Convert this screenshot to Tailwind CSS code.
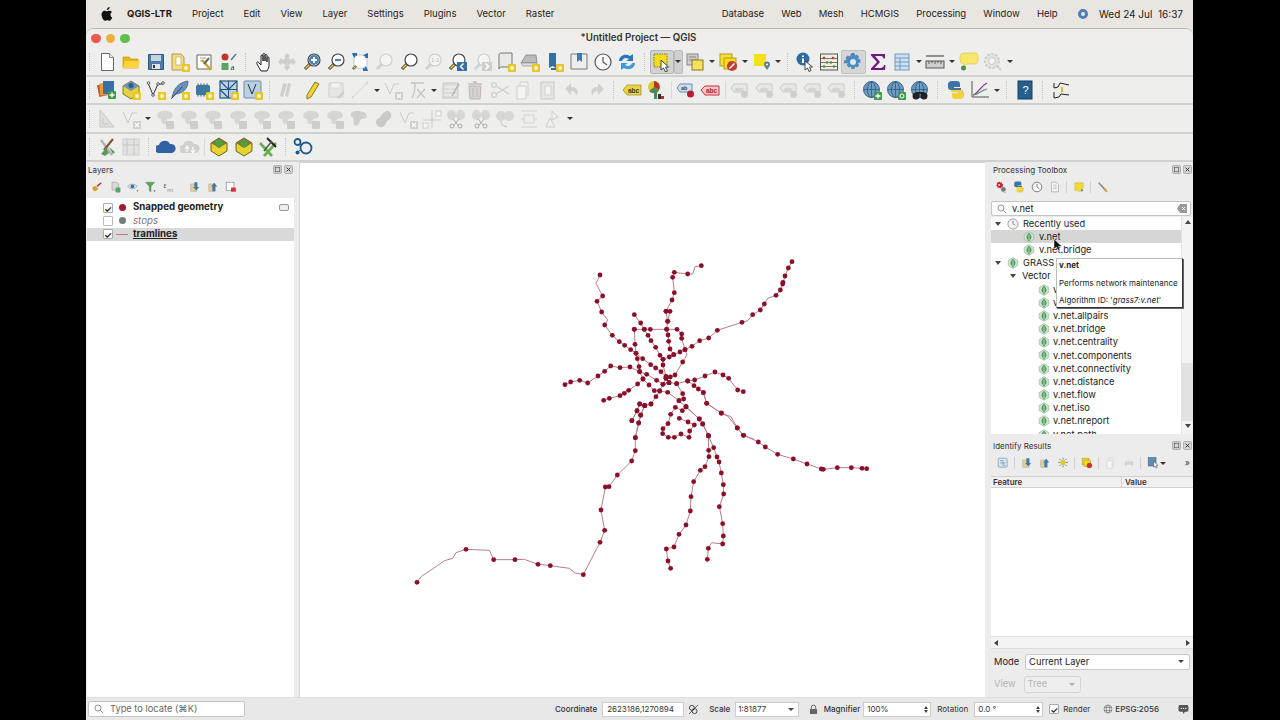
<!DOCTYPE html>
<html lang="en">
<head>
<meta charset="UTF-8">
<title>QGIS</title>
<script src="https://cdn.jsdelivr.net/npm/@tailwindcss/browser@4"></script>
</head>
<body class="bg-black w-[1280px] h-[720px] overflow-hidden font-['Inter',sans-serif] text-[#222] text-[9.300px]">

<!-- icon sheet -->
<svg class="absolute w-0 h-0">
  <defs>
    <g id="badge"><rect x="12" y="12" width="8" height="8" rx="1" fill="#e8c41e"/><path d="M16 13.500v5M13.800 14.700l4.400 2.600M18.200 14.700l-4.400 2.600" stroke="#fff" stroke-width="1"/></g>
    <g id="badge-g"><rect x="12" y="12" width="8" height="8" rx="1" fill="#cfcfcc"/><path d="M14 14l4 4M18 14l-4 4" stroke="#fff" stroke-width="1.200"/></g>
    <g id="lens"><path d="M8 12l-5 5" stroke="#333" stroke-width="3"/><path d="M7.500 12.500l-4 4" stroke="#e9c93a" stroke-width="1.600"/><circle cx="12" cy="8" r="6" fill="#fff" stroke="#444" stroke-width="1.200"/></g>
    <g id="lens-g"><path d="M8 12l-5 5" stroke="#d2d2cf" stroke-width="3"/><circle cx="12" cy="8" r="6" fill="#f4f4f2" stroke="#cfcfcc" stroke-width="1.200"/></g>
    <symbol id="new" viewBox="0 0 20 20"><path d="M4.500 1.500h8l4 4v13h-12z" fill="#fff" stroke="#666"/><path d="M12.500 1.500v4h4" fill="#eee" stroke="#888"/></symbol>
    <symbol id="open" viewBox="0 0 20 20"><path d="M2 16V5h6l2 2h7v9z" fill="#e5b416" stroke="#c79a10" stroke-width=".7"/><path d="M2 16l2-7h15l-2 7z" fill="#f8d63c"/></symbol>
    <symbol id="save" viewBox="0 0 20 20"><path d="M2.500 2.500h15v15h-15z" fill="#4c7da8" stroke="#2d587f"/><rect x="5" y="3" width="10" height="6" fill="#c8d3dc"/><rect x="6" y="12" width="8" height="5" fill="#e4e4e4"/><rect x="7" y="13" width="2" height="3" fill="#333"/></symbol>
    <symbol id="prj" viewBox="0 0 20 20"><path d="M2 2h9l3 3v13H2z" fill="#f2dc86" stroke="#b59a3a"/><path d="M6 5h5v8H6z" fill="#fff" stroke="#c3a94a" stroke-width=".7"/><use href="#badge"/></symbol>
    <symbol id="layman" viewBox="0 0 20 20"><path d="M3 3h14v14H3z" fill="#fff" stroke="#666"/><path d="M6 6h6M6 9h3" stroke="#99a" stroke-width="1"/><path d="M8 8l9 10" stroke="#c9a628" stroke-width="2.500"/><path d="M15 6l-5 6" stroke="#666" stroke-width="2"/></symbol>
    <symbol id="style" viewBox="0 0 20 20"><circle cx="6" cy="5" r="3.500" fill="#c8312b"/><rect x="2.500" y="11" width="7" height="7" fill="#5aa469"/><path d="M12 8l5-6" stroke="#5b7f9e" stroke-width="1.600"/><text x="11.500" y="18" font-size="9" fill="#333" font-family="Liberation Serif">a</text></symbol>
    <symbol id="hand" viewBox="0 0 20 20"><path d="M6 19c-1-2-3-5-4-7s1-3 2-1l2 2V4c0-1.500 2-1.500 2 0v5V2.500c0-1.500 2-1.500 2 0V9V3.500c0-1.500 2-1.500 2 0V10V6c0-1.500 2-1.500 2 0v7c0 3-1 4-2 6z" fill="#fff" stroke="#222" stroke-width="1" transform="translate(2 0)"/></symbol>
    <symbol id="pan" viewBox="0 0 20 20"><path d="M10 1l3 3-1.500 1.500L14 8l2-2 3 4-3 3-2-2-2.500 2.500L13 15l-3 4-3-4 1.500-1.500L6 11l-2 2-3-3 3-4 2 2 2.500-2.500L7 4z" fill="#cfd0cc"/></symbol>
    <symbol id="zin" viewBox="0 0 20 20"><use href="#lens"/><circle cx="12" cy="8" r="5" fill="#4b83b5"/><path d="M9 8h6M12 5v6" stroke="#fff" stroke-width="1.800"/></symbol>
    <symbol id="zout" viewBox="0 0 20 20"><use href="#lens"/><circle cx="12" cy="8" r="5" fill="#fff"/><path d="M9 8h6" stroke="#4b83b5" stroke-width="2.200"/></symbol>
    <symbol id="zfull" viewBox="0 0 20 20"><rect x="4" y="3" width="13" height="13" fill="#fff" stroke="#9ab" stroke-width=".6"/><path d="M2 1h5v3l-1.500-.5L5 6 3 4zM18 1v5h-3l.5-1.500L13 4l2-2zM18 19h-5v-3l1.500.5L15 14l2 2z" fill="#2f6ea5"/><path d="M6 14l-3 3" stroke="#333" stroke-width="2.400"/><path d="M5.500 14.500l-2 2" stroke="#e9c93a" stroke-width="1.200"/></symbol>
    <symbol id="zsel" viewBox="0 0 20 20"><use href="#lens-g"/></symbol>
    <symbol id="zlay" viewBox="0 0 20 20"><use href="#lens"/></symbol>
    <symbol id="z11" viewBox="0 0 20 20"><use href="#lens-g"/><text x="8" y="10" font-size="6" fill="#bbb" font-family="Liberation Sans">1:1</text></symbol>
    <symbol id="zlast" viewBox="0 0 20 20"><use href="#lens"/><rect x="10" y="10" width="10" height="9" fill="#33719f"/><path d="M16.500 11.500l-3 3 3 3" fill="none" stroke="#fff" stroke-width="1.500"/></symbol>
    <symbol id="znext" viewBox="0 0 20 20"><use href="#lens-g"/><rect x="10" y="10" width="10" height="9" fill="#cfcfcc"/><path d="M13.500 11.500l3 3-3 3" fill="none" stroke="#fff" stroke-width="1.500"/></symbol>
    <symbol id="map" viewBox="0 0 20 20"><path d="M3 3c0-2 2-2 2-2h11v14H5s-2 0-2 2z" fill="#e8e8e4" stroke="#777"/><use href="#badge"/></symbol>
    <symbol id="map3d" viewBox="0 0 20 20"><path d="M1 11l5-8h10l1 8z" fill="#bbb" stroke="#777" stroke-width=".7"/><path d="M1 11l16 0v3H3z" fill="#ddd" stroke="#888" stroke-width=".6"/><use href="#badge"/></symbol>
    <symbol id="bmk" viewBox="0 0 20 20"><path d="M5 1h7v15l-3.500-2L5 16z" fill="#37709f"/><path d="M7 16h5v2H7z" fill="#37709f"/><use href="#badge"/></symbol>
    <symbol id="bmks" viewBox="0 0 20 20"><path d="M2 2h16v15H2z" fill="#eee" stroke="#777"/><path d="M8 1h5v9l-2.500-2L8 10z" fill="#3f7aa8"/></symbol>
    <symbol id="clock" viewBox="0 0 20 20"><circle cx="10" cy="10" r="8" fill="#fafafa" stroke="#555" stroke-width="1.200"/><path d="M10 5v5l4 3" fill="none" stroke="#555" stroke-width="1.200"/></symbol>
    <symbol id="ref" viewBox="0 0 20 20"><path d="M2 9c0-5 6-8 11-5l3-2v7h-7l3-2c-3-2-6-1-7 2z" fill="#2678c0"/><path d="M18 11c0 5-6 8-11 5l-3 2v-7h7l-3 2c3 2 6 1 7-2z" fill="#4697da"/></symbol>
    <symbol id="sel" viewBox="0 0 20 20"><rect x="2" y="2" width="13" height="13" fill="#f3dc1a" stroke="#555" stroke-width=".8" stroke-dasharray="1.500 1"/><path d="M9 8v10l2.500-2 2 4 2-1-2-4h3z" fill="#fff" stroke="#333" stroke-width=".9"/></symbol>
    <symbol id="attr" viewBox="0 0 20 20"><rect x="2" y="2" width="11" height="11" fill="#ccc" stroke="#888"/><path d="M4 5h7M4 8h7" stroke="#888"/><rect x="7" y="8" width="11" height="10" fill="#f3e25a" stroke="#8a7a1c"/></symbol>
    <symbol id="desel" viewBox="0 0 20 20"><rect x="2" y="2" width="12" height="12" fill="#f4e03a" stroke="#b49a18"/><rect x="6" y="6" width="12" height="11" fill="#f8dc1e" stroke="#b49a18"/><circle cx="14" cy="14" r="5" fill="#c43b35"/><path d="M11.500 16.500l5-5" stroke="#fff" stroke-width="1.400"/></symbol>
    <symbol id="loc" viewBox="0 0 20 20"><rect x="2" y="2" width="12" height="12" fill="#f6e016"/><path d="M15 18c-2-3-3-4-3-5.500a3 3 0 016 0C18 14 17 15 15 18z" fill="#5e7f93"/><circle cx="15" cy="12.500" r="1" fill="#fff"/></symbol>
    <symbol id="ident" viewBox="0 0 20 20"><circle cx="8" cy="7" r="6.500" fill="#2b6ca5"/><path d="M8 3.500v1.500M8 6.500v4.500" stroke="#fff" stroke-width="2"/><path d="M10 9v9l2.500-2 1.500 3.500 2-1-1.500-3.500h3z" fill="#fff" stroke="#333" stroke-width=".9"/></symbol>
    <symbol id="abacus" viewBox="0 0 20 20"><rect x="1.500" y="2" width="17" height="16" fill="#f2efe0" stroke="#555"/><path d="M2 6.500h16M2 10.500h16M2 14.500h16" stroke="#777"/><g fill="#b33a3a"><circle cx="5" cy="6" r="1.300"/><circle cx="14" cy="6" r="1.300"/></g><g fill="#4e8b52"><circle cx="8" cy="10.500" r="1.300"/><circle cx="12" cy="10.500" r="1.300"/><circle cx="5" cy="14.500" r="1.300"/><circle cx="15" cy="14.500" r="1.300"/></g></symbol>
    <symbol id="gear" viewBox="0 0 20 20"><path d="M8.500 1h3l.5 2.500 2-.9 2.100 2.100-1 2 2.400.8v3l-2.400.6 1 2.200-2.100 2.100-2-1-.6 2.600h-3l-.6-2.600-2 1-2.100-2.100 1-2.200L1 11.500v-3l2.500-.8-1-2 2.100-2.100 2 .9z" fill="#4d8ac0"/><circle cx="10" cy="10" r="3" fill="#dce7ef"/></symbol>
    <symbol id="sigma" viewBox="0 0 20 20"><path d="M3 2h14v4.500h-1.500C15 4.500 14 4 12 4H7l5 6-5.500 6H12c2.500 0 3.500-.8 4-3h1.500L17 18H3v-1.500L9 10 3 3.500z" fill="#6e1a80"/></symbol>
    <symbol id="table" viewBox="0 0 20 20"><rect x="3" y="2" width="14" height="16" fill="#cfe0ee" stroke="#6b9cc2"/><path d="M3 6h14M3 10h14M3 14h14M8 6v12" stroke="#6b9cc2"/></symbol>
    <symbol id="ruler" viewBox="0 0 20 20"><path d="M1 4h18" stroke="#333"/><rect x="1" y="9" width="18" height="7" fill="#cfcfcf" stroke="#555"/><path d="M4 9v3M7 9v2M10 9v3M13 9v2M16 9v3" stroke="#444" stroke-width=".8"/></symbol>
    <symbol id="tip" viewBox="0 0 20 20"><path d="M5 1h11c3 0 3 2 3 4v3c0 3-2 4-4 4H8l-3 3v-3c-3 0-4-2-4-4V5c0-2 1-4 4-4z" fill="#f7e66b" stroke="#d9c53d" stroke-width=".6"/><circle cx="4.500" cy="16" r="2.500" fill="#4e8b52"/></symbol>
    <symbol id="gearz" viewBox="0 0 20 20"><circle cx="9" cy="9" r="7" fill="#e4e4e2" stroke="#ccc" stroke-width="2" stroke-dasharray="2.500 1.500"/><circle cx="9" cy="9" r="3.500" fill="#f3f3f3" stroke="#c8c8c8"/><path d="M13 13l5 5" stroke="#d0d0ce" stroke-width="2"/></symbol>
    <symbol id="addrast" viewBox="0 0 20 20"><rect x="1" y="4" width="10" height="12" fill="#c85a32" transform="rotate(-12 6 10)"/><rect x="3" y="3" width="10" height="12" fill="#e2a23a" transform="rotate(-5 8 9)"/><rect x="6" y="1" width="11" height="13" fill="#3c6ea5"/><rect x="11" y="11" width="8" height="8" rx="1" fill="#3f9a50"/><path d="M15 12.500v5M12.500 15h5" stroke="#fff" stroke-width="1.400"/></symbol>
    <symbol id="gpkg" viewBox="0 0 20 20"><path d="M10 1l8 5v8l-8 5-8-5V6z" fill="#e6d23f" stroke="#6a5a10" stroke-width=".8"/><path d="M2 6l8-5 8 5-8 5z" fill="#6f93b5"/><circle cx="10" cy="5.500" r="2.500" fill="#2d5d8a"/><use href="#badge"/></symbol>
    <symbol id="vec" viewBox="0 0 20 20"><path d="M2 3l5 12 5-11 5 0" fill="none" stroke="#333" stroke-width="1"/><g fill="#fff" stroke="#333" stroke-width=".8"><circle cx="2.500" cy="3" r="1.300"/><circle cx="7" cy="15" r="1.300"/><circle cx="12" cy="4" r="1.300"/><circle cx="17" cy="3" r="1.300"/></g><use href="#badge"/></symbol>
    <symbol id="feather" viewBox="0 0 20 20"><path d="M2 18C3 9 9 2 18 1c0 8-5 12-12 13z" fill="#6c93b7" stroke="#2f5a80" stroke-width=".7"/><path d="M1 19L12 7" stroke="#234" stroke-width=".8"/><use href="#badge"/></symbol>
    <symbol id="chip" viewBox="0 0 20 20"><rect x="2" y="5" width="14" height="10" rx="1.500" fill="#3e76a8"/><path d="M4 3.500v1.500M7 3.500v1.500M10 3.500v1.500M13 3.500v1.500M4 15v1.500M7 15v1.500M10 15v1.500" stroke="#355"/><use href="#badge"/></symbol>
    <symbol id="mesh" viewBox="0 0 20 20"><rect x="1" y="1" width="17" height="17" fill="#bcd3e6" stroke="#23557f" stroke-width="1.200"/><path d="M1 9.500h17M9.500 1v17M1 1l8.500 8.500L18 1M1 9.500L9.500 18" stroke="#23557f" fill="none" stroke-width="1.100"/><use href="#badge"/></symbol>
    <symbol id="vt" viewBox="0 0 20 20"><rect x="1" y="1" width="17" height="17" rx="1" fill="#b9cfe2" stroke="#6e8ba5"/><path d="M5 4l4 10 4-10" stroke="#234" fill="none"/><use href="#badge"/></symbol>
    <symbol id="pens" viewBox="0 0 20 20"><path d="M3 16l3-13 4 1-4 13zM8 16l3-13 3 1-3 13z" fill="#cfcfcc"/></symbol>
    <symbol id="pencil" viewBox="0 0 20 20"><path d="M13 2l4 2-8 13-4 2 0-4z" fill="#f1d52f" stroke="#6a5b12" stroke-width=".8"/></symbol>
    <symbol id="savedis" viewBox="0 0 20 20"><path d="M3 3h14v14H3z" fill="#e6e6e4" stroke="#cfcfcc"/><rect x="5" y="3" width="9" height="5" fill="#f3f3f1" stroke="#d2d2cf" stroke-width=".6"/><path d="M12 18l6-6" stroke="#ccc" stroke-width="2"/></symbol>
    <symbol id="linedis" viewBox="0 0 20 20"><path d="M3 17L17 3" stroke="#d8d8d5"/><circle cx="3" cy="17" r="1.200" fill="#d8d8d5"/><circle cx="17" cy="3" r="1.200" fill="#d8d8d5"/></symbol>
    <symbol id="vdis" viewBox="0 0 20 20"><path d="M2 3l5 11 4-10 5 0" fill="none" stroke="#c9c9c6"/><use href="#badge-g"/></symbol>
    <symbol id="fxdis" viewBox="0 0 20 20"><path d="M3 3h13M7 3c0 8-1 12-3 15M9 9l8 9M17 9l-8 9" fill="none" stroke="#c4c4c1" stroke-width="1.300"/></symbol>
    <symbol id="tbldis" viewBox="0 0 20 20"><rect x="2" y="3" width="15" height="15" fill="#dcdcd8" stroke="#c9c9c6"/><path d="M3 7h13M3 11h13M3 15h13" stroke="#f4f4f2"/><path d="M11 16L18 4" stroke="#b9b9b6" stroke-width="1.500"/></symbol>
    <symbol id="trash" viewBox="0 0 20 20"><path d="M4 6h12l-1 13H5z" fill="#d8d3d0" stroke="#bdb5b2"/><path d="M3 4h14M8 2h4" stroke="#c4bcb9" stroke-width="1.500"/><path d="M8 8v9M12 8v9" stroke="#bdb5b2"/></symbol>
    <symbol id="cut" viewBox="0 0 20 20"><circle cx="4" cy="5" r="2.400" fill="none" stroke="#cfcfcc" stroke-width="1.300"/><circle cx="4" cy="15" r="2.400" fill="none" stroke="#cfcfcc" stroke-width="1.300"/><path d="M6 6l13 8M6 14l13-8" stroke="#cfcfcc" stroke-width="1.300"/></symbol>
    <symbol id="copy" viewBox="0 0 20 20"><path d="M6 2h8v13H6z" fill="#f0f0ee" stroke="#d2d2cf"/><path d="M3 6h9l0 13H3z" fill="#f4f4f2" stroke="#cfcfcc"/></symbol>
    <symbol id="paste" viewBox="0 0 20 20"><rect x="3" y="2" width="13" height="17" fill="#e6e6e4" stroke="#c9c9c6"/><rect x="7" y="6" width="6" height="9" fill="#f4f4f2" stroke="#d0d0cd"/></symbol>
    <symbol id="undo" viewBox="0 0 20 20"><path d="M9 3L3 9l6 6v-4c3 0 5 1 5 5 3-4 2-9-5-9z" fill="#d0d0cd"/></symbol>
    <symbol id="redo" viewBox="0 0 20 20"><path d="M11 3l6 6-6 6v-4c-3 0-5 1-5 5-3-4-2-9 5-9z" fill="#d0d0cd"/></symbol>
    <symbol id="lbl" viewBox="0 0 20 20"><path d="M1 10l4-5h14v10H5z" fill="#ecd53a" stroke="#8a7a1c" stroke-width=".6"/><text x="6" y="12.500" font-size="6.500" font-weight="700" fill="#333" font-family="Liberation Sans">abc</text></symbol>
    <symbol id="pie" viewBox="0 0 20 20"><circle cx="8" cy="7" r="6" fill="#e4c92d"/><path d="M8 7V1a6 6 0 015 9z" fill="#b4342c"/><path d="M8 7l5 3a6 6 0 01-10 1z" fill="#4e8b52"/><rect x="8" y="12" width="3" height="7" fill="#4e8b52"/><rect x="12" y="14" width="3" height="5" fill="#333"/><rect x="15" y="16" width="3" height="3" fill="#b4342c"/></symbol>
    <symbol id="lblb" viewBox="0 0 20 20"><path d="M1 8l3-4h12v8H4z" fill="#cfe0ee" stroke="#5f8db3"/><text x="5" y="10" font-size="5.500" font-weight="700" fill="#345" font-family="Liberation Sans">ab</text><circle cx="14.500" cy="14" r="3.500" fill="#b4202e"/></symbol>
    <symbol id="lblr" viewBox="0 0 20 20"><path d="M1 10l4-4h14v9H5z" fill="#f3c7c7" stroke="#c4333c"/><text x="6" y="13" font-size="6.500" font-weight="700" fill="#b4202e" font-family="Liberation Sans">abc</text></symbol>
    <symbol id="lblg" viewBox="0 0 20 20"><path d="M1 8l3-4h13v8H4z" fill="#e8e8e6" stroke="#c9c9c6"/><text x="5" y="10.500" font-size="5.500" fill="#bbb" font-family="Liberation Sans">abc</text><circle cx="14.500" cy="14.500" r="3.500" fill="#cfcfcc"/></symbol>
    <symbol id="globe" viewBox="0 0 20 20"><circle cx="9.500" cy="9.500" r="8" fill="#6e9bc0" stroke="#3d6a8f"/><path d="M9.500 1.500v16M1.500 9.500h16" stroke="#2e5a7e" stroke-width=".8"/><ellipse cx="9.500" cy="9.500" rx="4" ry="8" fill="none" stroke="#2e5a7e" stroke-width=".8"/></symbol>
    <symbol id="globep" viewBox="0 0 20 20"><use href="#globe"/><rect x="12" y="12" width="8" height="8" rx="1" fill="#3f9a50"/><path d="M16 13.500v5M13.500 16h5" stroke="#fff" stroke-width="1.300"/></symbol>
    <symbol id="globes" viewBox="0 0 20 20"><use href="#globe"/><rect x="12" y="12" width="8" height="8" rx="1" fill="#3f9a50"/><circle cx="16" cy="16" r="2" fill="none" stroke="#fff"/></symbol>
    <symbol id="globeb" viewBox="0 0 20 20"><use href="#globe"/><circle cx="6" cy="16" r="3.500" fill="#222"/><circle cx="14" cy="16" r="3.500" fill="#222"/><path d="M6 13h8" stroke="#222" stroke-width="2"/></symbol>
    <symbol id="py" viewBox="0 0 20 20"><path d="M6 1h5c2 0 3 1 3 3v3H8v1h7v2H5C3 10 2 9 2 7V4c0-2 2-3 4-3z" fill="#3b75a8"/><path d="M14 19H9c-2 0-3-1-3-3v-3h6v-1H5v-2h10c2 0 3 1 3 3v3c0 2-2 3-4 3z" fill="#f3d03e"/></symbol>
    <symbol id="chart" viewBox="0 0 20 20"><path d="M2 1v16h17" fill="none" stroke="#555"/><path d="M3 15c5-1 6-8 14-12" fill="none" stroke="#8a2aa0" stroke-width="1.200"/><path d="M3 15c6 0 8-5 14-6" fill="none" stroke="#4e9a5a" stroke-width="1.200"/></symbol>
    <symbol id="help" viewBox="0 0 20 20"><rect x="3" y="1" width="14" height="18" fill="#24608f" stroke="#183f5f"/><text x="7.500" y="14" font-size="11" fill="#fff" font-family="Liberation Sans">?</text></symbol>
    <symbol id="prof" viewBox="0 0 20 20"><path d="M2 3v5l4-1 2-4 9 2M2 12v6l5-1 2-3 8 1" fill="none" stroke="#222" stroke-width="1"/><path d="M10 7v5" stroke="#e0b93a" stroke-width="2"/></symbol>
    <symbol id="digi" viewBox="0 0 20 20"><path d="M3 1l14 17H3z" fill="#e0e0dc" stroke="#c4c4c1"/><path d="M6 9v6h5" fill="none" stroke="#c4c4c1"/></symbol>
    <symbol id="blob" viewBox="0 0 20 20"><path d="M3 4c3-3 11-3 14 0 3 4-2 6-5 6l-1 5c-3 1-5-1-5-5-3 0-5-3-3-6z" fill="#d6d6d3"/><rect x="11" y="12" width="8" height="8" rx="1" fill="#cdcdca"/></symbol>
    <symbol id="blob3" viewBox="0 0 20 20"><path d="M2 4c3-3 9-2 12-1 3 1 5 3 3 6l-5 1c-2 5-4 8-7 6-1-3 0-6-1-7-2-1-3-3-2-5z" fill="#cfd0cc"/></symbol>
    <symbol id="blob4" viewBox="0 0 20 20"><path d="M3 13c0-3 2-3 4-5s4-6 7-6 5 3 4 6-4 3-5 6-4 5-6 4-4-2-4-5z" fill="#c9cac6"/></symbol>
    <symbol id="split" viewBox="0 0 20 20"><path d="M10 1v18M1 11h18" stroke="#ccc"/><rect x="1" y="14" width="5" height="5" fill="#f6f6f4" stroke="#ccc"/><rect x="14" y="2" width="5" height="5" fill="#f6f6f4" stroke="#ccc"/><circle cx="10" cy="11" r="1.500" fill="#ccc"/></symbol>
    <symbol id="scis" viewBox="0 0 20 20"><ellipse cx="5.500" cy="6" rx="4.500" ry="5" fill="#d6d6d3"/><ellipse cx="14.500" cy="6" rx="4.500" ry="5" fill="#d6d6d3"/><path d="M7 10l5 6M13 10l-5 6" stroke="#aaa"/><circle cx="6" cy="17" r="2" fill="none" stroke="#aaa"/><circle cx="14" cy="17" r="2" fill="none" stroke="#aaa"/></symbol>
    <symbol id="mrg" viewBox="0 0 20 20"><ellipse cx="6" cy="7" rx="5" ry="5" fill="#d6d6d3"/><ellipse cx="14" cy="7" rx="5" ry="5" fill="#d6d6d3"/><path d="M6 12c0 4 3 5 6 6" fill="none" stroke="#bbb"/></symbol>
    <symbol id="dist" viewBox="0 0 20 20"><path d="M2 2h16M2 18h16M2 10h16" stroke="#d2d2cf"/><path d="M5 6h10v8H5z" fill="#eee" stroke="#d2d2cf"/></symbol>
    <symbol id="rot" viewBox="0 0 20 20"><path d="M9 2l6 6-6 3zM3 18h9L7 9z" fill="#eee" stroke="#cfcfcc"/></symbol>
    <symbol id="tools" viewBox="0 0 20 20"><path d="M4 3l11 15" stroke="#b5b5b0" stroke-width="2.500"/><path d="M16 2L7 13" stroke="#7a5a3a" stroke-width="2.200"/><path d="M4 17l5-6 3 5-4 3z" fill="#5a9a5e"/><path d="M12 10l4 7 2-2z" fill="#5a9a5e"/></symbol>
    <symbol id="plan" viewBox="0 0 20 20"><rect x="2" y="2" width="16" height="16" fill="#e3e3e0" stroke="#cfcfcc"/><path d="M6 2v16M13 2v16M2 8h16" stroke="#c4c4c1"/></symbol>
    <symbol id="cloud" viewBox="0 0 20 20"><path d="M3 15a4 4 0 010-8 6 6 0 0111-1 4.500 4.500 0 012 9z" transform="translate(0 1)" fill="#2f62a3"/></symbol>
    <symbol id="cloudup" viewBox="0 0 20 20"><path d="M3 15a4 4 0 010-8 6 6 0 0111-1 4.500 4.500 0 012 9z" transform="translate(0 1)" fill="#d0d0cd"/><path d="M7 15v-5M5 12l2-3 2 3M13 10v5M11 13l2 3 2-3" stroke="#fff" fill="none" stroke-width="1.200"/></symbol>
    <symbol id="gdown" viewBox="0 0 20 20"><path d="M10 1l8 5v8l-8 5-8-5V6z" fill="#e8d32e" stroke="#5f5210" stroke-width=".9"/><path d="M2 6l8-5 8 5-8 5z" fill="#887038"/><path d="M7 3h6v3h2l-5 5-5-5h2z" fill="#4da13e"/></symbol>
    <symbol id="gup" viewBox="0 0 20 20"><path d="M10 1l8 5v8l-8 5-8-5V6z" fill="#e8d32e" stroke="#5f5210" stroke-width=".9"/><path d="M2 6l8-5 8 5-8 5z" fill="#887038"/><path d="M10 2l5 5h-2v3H7V7H5z" fill="#4da13e"/></symbol>
    <symbol id="xtools" viewBox="0 0 20 20"><path d="M2 6l12 13M18 6L6 19" stroke="#67b04d" stroke-width="2.600"/><path d="M9 1l9 9" stroke="#222" stroke-width="2"/><path d="M6 14l8-10" stroke="#555" stroke-width="1.500"/></symbol>
    <symbol id="net" viewBox="0 0 20 20"><circle cx="4.500" cy="5" r="3" fill="none" stroke="#1d5a93" stroke-width="1.800"/><circle cx="13" cy="11" r="5.500" fill="none" stroke="#1d5a93" stroke-width="1.800"/><circle cx="4.500" cy="15.500" r="2" fill="#1d5a93"/><path d="M7 7l2 1.500M6 14l2.500-1.500" stroke="#1d5a93"/></symbol>
    <symbol id="grass" viewBox="0 0 20 20"><path d="M10 1l8 5v8l-8 5-8-5V6z" fill="#cfe3cf" stroke="#7aa67a" stroke-width=".8"/><path d="M10 3c3 3 5 6 4 9-1 2-3 3-4 6-1-3-3-4-4-6-1-3 1-6 4-9z" fill="#4f9b62"/><path d="M10 6v9" stroke="#e4f2e4" stroke-width="1.200"/></symbol>
    <symbol id="clk2" viewBox="0 0 20 20"><circle cx="10" cy="10" r="8.500" fill="#f2f2f2" stroke="#777" stroke-width="1.100"/><path d="M10 4.500V10l4 2" fill="none" stroke="#666" stroke-width="1.100"/></symbol>
    <symbol id="search" viewBox="0 0 20 20"><circle cx="8" cy="8" r="6" fill="none" stroke="#888" stroke-width="1.800"/><path d="M12.500 12.500l6 6" stroke="#888" stroke-width="1.800"/></symbol>
    <symbol id="float" viewBox="0 0 12 12"><rect x=".5" y=".5" width="11" height="11" rx="2.500" fill="#d6d6d6" stroke="#888" stroke-width=".8"/><rect x="3" y="3" width="6" height="6" fill="none" stroke="#555" stroke-width=".9"/></symbol>
    <symbol id="close" viewBox="0 0 12 12"><rect x=".5" y=".5" width="11" height="11" rx="2.500" fill="#d6d6d6" stroke="#888" stroke-width=".8"/><path d="M3.500 3.500l5 5M8.500 3.500l-5 5" stroke="#333" stroke-width="1.300"/></symbol>
    <symbol id="brush" viewBox="0 0 20 20"><path d="M2 11c2-1 4-3 5-3l5 5c-1 2-4 4-7 4-1-1-2-3-3-6z" fill="#d9a32a"/><path d="M10 9l7-6" stroke="#b4342c" stroke-width="2.500"/></symbol>
    <symbol id="addg" viewBox="0 0 20 20"><path d="M5 2h8l3 3v10H5z" fill="#d9d9d6" stroke="#999"/><rect x="11" y="11" width="8" height="8" rx="1" fill="#5aa469"/></symbol>
    <symbol id="eye" viewBox="0 0 20 20"><path d="M1 9c4-5 12-5 16 0-4 5-12 5-16 0z" fill="#d8e4ee" stroke="#7a92a6"/><circle cx="9" cy="9" r="3" fill="#3f6f95"/><path d="M16 16h3l-1.500 2z" fill="#333"/></symbol>
    <symbol id="filter" viewBox="0 0 20 20"><path d="M1 2h15l-6 7v9l-3-2V9z" fill="#5ea35e" stroke="#3f7f3f" stroke-width=".6"/><path d="M14 16h4l-2 2z" fill="#333"/></symbol>
    <symbol id="exp" viewBox="0 0 20 20"><text x="1" y="11" font-size="12" fill="#444" font-family="Liberation Serif">ε</text><path d="M8 18v-4h3v4M13 18v-4h3v4" fill="none" stroke="#999"/></symbol>
    <symbol id="rm" viewBox="0 0 20 20"><rect x="2" y="2" width="13" height="14" fill="#fff" stroke="#777"/><rect x="10" y="11" width="8" height="7" rx="1" fill="#d4353c"/></symbol>
    <symbol id="models" viewBox="0 0 20 20"><path d="M7 1l1.500 1.500L11 2l.5 2.500L14 6l-1.500 2L13 10l-2.500.5L9 12.500 7 11 4.500 11.500 4 9 2 7.500 3.500 5.500 3 3l2.500-.5z" fill="#c8202c"/><circle cx="7" cy="6.500" r="1.500" fill="#fff"/><circle cx="14" cy="14" r="4" fill="#778"/><path d="M15 19l3 0-1.500 1z" fill="#333"/></symbol>
    <symbol id="hist" viewBox="0 0 20 20"><path d="M4 2h8l4 4v12H4z" fill="#f5f5f3" stroke="#999"/><path d="M7 7h6M7 10h6M7 13h6" stroke="#aaa"/></symbol>
    <symbol id="tag" viewBox="0 0 20 20"><path d="M3 3h14v9l-6 6-2-2H3z" fill="#f1d93a" stroke="#b9a321" stroke-width=".6"/><path d="M14 13l3 3-3 2z" fill="#555"/></symbol>
    <symbol id="wrench" viewBox="0 0 20 20"><path d="M3 3l12 13" stroke="#8c8c8c" stroke-width="2.800"/><path d="M12 13l5 5" stroke="#c9a628" stroke-width="3"/></symbol>
    <symbol id="nodes" viewBox="0 0 20 20"><rect x="2" y="2" width="15" height="15" rx="2" fill="#d8e4ee" stroke="#5f8db3"/><path d="M5 10h9M5 6h5v8h4" fill="none" stroke="#5f8db3"/></symbol>
    <symbol id="dn2" viewBox="0 0 20 20"><rect x="3" y="5" width="10" height="12" fill="#e6d08a" stroke="#aaa"/><path d="M9 2h5v8h3l-5 6-5-6h2z" fill="#3f78aa"/></symbol>
    <symbol id="up2" viewBox="0 0 20 20"><rect x="3" y="5" width="10" height="12" fill="#e6d08a" stroke="#aaa"/><path d="M9 17h5V9h3l-5-6-5 6h2z" fill="#3f78aa"/></symbol>
    <symbol id="sun" viewBox="0 0 20 20"><circle cx="10" cy="9" r="4.500" fill="#e6c72d"/><path d="M10 1v3M10 14v3M2 9h3M15 9h3M4 3l2 2M16 3l-2 2M4 15l2-2M16 15l-2-2" stroke="#3f78aa" stroke-width="1.400"/></symbol>
    <symbol id="dselr" viewBox="0 0 20 20"><rect x="2" y="2" width="11" height="11" fill="#f4e03a" stroke="#b49a18"/><rect x="5" y="5" width="11" height="11" fill="#f8dc1e" stroke="#b49a18"/><circle cx="14" cy="14" r="4.500" fill="#c43b35"/></symbol>
    <symbol id="printd" viewBox="0 0 20 20"><rect x="3" y="7" width="14" height="8" rx="2" fill="#d4d4d2"/><rect x="6" y="3" width="8" height="4" fill="#e8e8e6"/><rect x="6" y="13" width="8" height="4" fill="#f0f0ee"/></symbol>
    <symbol id="idn" viewBox="0 0 20 20"><rect x="2" y="1" width="13" height="14" fill="#5f8db3" stroke="#3d6a8f"/><path d="M11 7v10l2.500-2 1.500 3.500 2-1-1.500-3.500h3z" fill="#fff" stroke="#333" stroke-width=".8"/></symbol>
    <symbol id="chain" viewBox="0 0 20 20"><circle cx="7" cy="7" r="4.500" fill="none" stroke="#333" stroke-width="1.600"/><circle cx="12" cy="13" r="4.500" fill="none" stroke="#333" stroke-width="1.600"/><path d="M2 18L18 2" stroke="#333" stroke-width="1.400"/></symbol>
    <symbol id="lock" viewBox="0 0 20 20"><path d="M6 9V6a4 4 0 018 0v3" fill="none" stroke="#666" stroke-width="1.800"/><rect x="3.500" y="9" width="13" height="9" rx="1" fill="#666"/></symbol>
    <symbol id="earth" viewBox="0 0 20 20"><circle cx="10" cy="10" r="8" fill="none" stroke="#555"/><ellipse cx="10" cy="10" rx="3.500" ry="8" fill="none" stroke="#555"/><path d="M2 7h16M2 13h16" stroke="#555"/></symbol>
    <symbol id="bubble" viewBox="0 0 20 20"><path d="M4 2h12c2 0 3 1 3 3v6c0 2-1 3-3 3h-3l-4 4v-4H4c-2 0-3-1-3-3V5c0-2 1-3 3-3z" fill="#555"/><circle cx="6" cy="8" r="1.200" fill="#fff"/><circle cx="10" cy="8" r="1.200" fill="#fff"/><circle cx="14" cy="8" r="1.200" fill="#fff"/></symbol>
  </defs>
</svg>

<div class="ml-[86px] w-[1107px] h-[720px] flex flex-col bg-[#e9e6e1]">

  <!-- mac menu bar -->
  <div class="h-[28px] shrink-0 flex items-center text-[#1c1c1c] text-[9.500px]">
    <svg class="ml-[15px] w-[12px] h-[14px]" viewBox="0 0 170 200"><path fill="#111" d="M150 172c-8 12-16 24-29 24s-17-8-32-8-20 8-32 8-22-13-30-25C10 147-2 105 14 77c8-14 23-23 38-23 12 0 24 8 32 8s21-10 36-8c6 0 24 2 35 19-1 1-21 12-21 36 0 29 25 39 26 39-1 1-4 14-10 24zM112 30c7-8 11-19 10-30-10 0-21 6-28 14-6 7-12 19-10 29 11 1 22-5 28-13z"/></svg>
    <div class="ml-[14px] flex gap-[20px] items-center">
      <span class="font-bold">QGIS-LTR</span><span>Project</span><span>Edit</span><span>View</span><span>Layer</span><span>Settings</span><span>Plugins</span><span>Vector</span><span>Raster</span>
    </div>
    <div class="ml-auto flex gap-[17.200px] items-center pr-[10px]">
      <span>Database</span><span>Web</span><span>Mesh</span><span>HCMGIS</span><span>Processing</span><span>Window</span><span>Help</span>
      <span class="ml-[3px] w-[10px] h-[10px] rounded-full border-[3px] border-[#4f7fb5] bg-[#e8e8e8]"></span>
      <span class="ml-[-6px] whitespace-pre text-[10px]">Wed 24 Jul  16:37</span>
    </div>
  </div>

  <!-- window -->
  <div class="flex-1 flex flex-col bg-[#ececec] rounded-t-[8px] border-t border-[#b9b9b6] min-h-0">
    <div class="h-[19px] shrink-0 flex items-center relative bg-[#efeeec] rounded-t-[8px]">
      <div class="flex gap-[5px] ml-[5px]">
        <span class="w-[9.500px] h-[9.500px] rounded-full bg-[#ee5a52]"></span>
        <span class="w-[9.500px] h-[9.500px] rounded-full bg-[#f1ae3d]"></span>
        <span class="w-[9.500px] h-[9.500px] rounded-full bg-[#5fc04a]"></span>
      </div>
      <div class="absolute left-0 right-[2px] text-center font-semibold text-[#333] text-[9.700px]">*Untitled Project — QGIS</div>
    </div>

    <div id="toolbars"></div>

    <!-- docks and canvas -->
    <div class="h-[535px] shrink-0 flex">
      <div class="w-[208px] shrink-0 flex flex-col">
        <div class="h-[15px] flex items-center pl-[2px] text-[8px] text-[#333]">
          <span>Layers</span>
          <svg class="ml-auto w-[9px] h-[9px]"><use href="#float"/></svg>
          <svg class="ml-[2px] mr-[1px] w-[9px] h-[9px]"><use href="#close"/></svg>
        </div>
        <div id="layer-tools" class="h-[18px] mt-[1px] flex items-center pl-[3px] gap-[3px] mb-[2px]"></div>
        <div class="flex-1 ml-[1px] bg-white text-[9.700px] pt-[3px]">
          <div class="h-[13.300px] flex items-center pl-[16px] relative">
            <span class="w-[10px] h-[10px] bg-white border border-[#aaa] rounded-[1px] text-[9px] leading-[9px] text-center font-bold">✓</span>
            <span class="ml-[6px] w-[7px] h-[7px] rounded-full bg-[#a3172c]"></span>
            <span class="ml-[7px] font-bold">Snapped geometry</span>
            <svg class="absolute right-[5px] top-[2px] w-[10px] h-[9px]" viewBox="0 0 10 9"><rect x=".5" y="1.500" width="9" height="6" rx="1.500" fill="#eee" stroke="#999"/></svg>
          </div>
          <div class="h-[13.300px] flex items-center pl-[16px]">
            <span class="w-[10px] h-[10px] bg-white border border-[#bbb] rounded-[1px]"></span>
            <span class="ml-[6px] w-[7px] h-[7px] rounded-full bg-[#6c8078]"></span>
            <span class="ml-[7px] italic text-[#777]">stops</span>
          </div>
          <div class="h-[13.300px] flex items-center pl-[16px] bg-[#d9d9d9]">
            <span class="w-[10px] h-[10px] bg-white border border-[#aaa] rounded-[1px] text-[9px] leading-[9px] text-center font-bold">✓</span>
            <span class="ml-[3px] w-[12px] h-px bg-[#c4737f]"></span>
            <span class="ml-[5px] font-bold underline">tramlines</span>
          </div>
        </div>
      </div>

      <div class="w-[5px] shrink-0"></div>

      <div class="w-[686px] shrink-0 bg-white border-t border-l border-[#d4d4d4]">
        <svg id="map-canvas" class="block" width="686" height="534" viewBox="299 163 686 534"></svg>
      </div>

      <div class="w-[5px] shrink-0"></div>

      <div class="w-[203px] shrink-0 flex flex-col relative">
        <div class="h-[15px] flex items-center pl-[3px] text-[8px] text-[#333] shrink-0">
          <span>Processing Toolbox</span>
          <svg class="ml-auto w-[9px] h-[9px]"><use href="#float"/></svg>
          <svg class="ml-[2px] mr-[1px] w-[9px] h-[9px]"><use href="#close"/></svg>
        </div>
        <div id="proc-tools" class="h-[18px] mt-[1px] flex items-center pl-[3px] gap-[3px] shrink-0"></div>
        <div class="ml-[1px] mr-[2px] h-[15px] bg-white border border-[#c4c4c4] rounded-[2px] flex items-center pl-[5px] mt-[5px] shrink-0">
          <svg class="w-[10px] h-[10px]"><use href="#search"/></svg>
          <span class="ml-[5px]">v.net</span>
          <svg class="ml-auto mr-[3px] w-[10px] h-[9px]" viewBox="0 0 10 9"><path d="M3 0h7v9H3L0 4.500z" fill="#999"/><path d="M5 3l3 3M8 3L5 6" stroke="#fff"/></svg>
        </div>
        <div class="ml-[1px] h-[217px] mt-[1px] bg-white flex shrink-0">
          <div id="tree" class="flex-1 overflow-hidden"></div>
          <div class="w-[12px] flex flex-col items-center bg-[#f4f4f4] border-l border-[#e4e4e4]">
            <span class="mt-[3px] w-0 h-0 border-x-[3px] border-x-transparent border-b-[4px] border-b-[#444]"></span>
            <span class="mt-[139px] w-full h-[58px] bg-[#e2e2e2]"></span>
            <span class="mt-[3px] w-0 h-0 border-x-[3px] border-x-transparent border-t-[4px] border-t-[#444]"></span>
          </div>
        </div>
        <div class="h-[15px] flex items-center pl-[3px] mt-[4px] text-[8px] text-[#333] shrink-0">
          <span>Identify Results</span>
          <svg class="ml-auto w-[9px] h-[9px]"><use href="#float"/></svg>
          <svg class="ml-[2px] mr-[1px] w-[9px] h-[9px]"><use href="#close"/></svg>
        </div>
        <div id="id-tools" class="h-[20px] flex items-center shrink-0 pl-[5px] gap-[3px]"></div>
        <div class="ml-[1px] h-[160px] mt-[3px] flex flex-col bg-white shrink-0">
          <div class="h-[12px] flex bg-[#f0f0f0] border-y border-[#d0d0d0] text-[8px] font-semibold text-[#333]">
            <span class="w-[131px] pl-[2px] border-r border-[#d0d0d0] leading-[10px]">Feature</span>
            <span class="pl-[3px] leading-[10px]">Value</span>
          </div>
        </div>
        <div class="ml-[1px] h-[13px] flex items-center justify-between bg-[#f4f4f4] border-y border-[#dcdcdc] px-[3px] shrink-0">
          <span class="w-0 h-0 border-y-[3px] border-y-transparent border-r-[4px] border-r-[#444]"></span>
          <span class="w-0 h-0 border-y-[3px] border-y-transparent border-l-[4px] border-l-[#444]"></span>
        </div>
        <div class="h-[17px] mt-[4px] flex items-center pl-[4px] shrink-0">
          <span>Mode</span>
          <div class="ml-[6px] w-[165px] h-[16px] bg-white border border-[#c8c8c8] rounded-[3px] flex items-center pl-[3px]">
            <span>Current Layer</span>
            <span class="ml-auto mr-[5px] w-0 h-0 border-x-[3px] border-x-transparent border-t-[3px] border-t-[#444]"></span>
          </div>
        </div>
        <div class="h-[18px] mt-[5px] flex items-center pl-[4px] text-[#b4b4b4] shrink-0">
          <span>View</span>
          <div class="ml-[8px] w-[57px] h-[17px] bg-[#eee] border border-[#d4d4d4] rounded-[3px] flex items-center pl-[3px]">
            <span>Tree</span>
            <span class="ml-auto mr-[5px] w-0 h-0 border-x-[3px] border-x-transparent border-t-[3px] border-t-[#aaa]"></span>
          </div>
        </div>

        <!-- tooltip -->
        <div class="absolute left-[66px] top-[96px] w-[127px] h-[50px] bg-white border border-[#333] border-t-[#bbb] border-l-[#bbb] text-[8px] pl-[2px] flex flex-col justify-between pb-[1px] whitespace-nowrap shadow-[1px_1px_0_#666]">
          <span class="font-bold">v.net</span>
          <span>Performs network maintenance</span>
          <span>Algorithm ID: '<i>grass7:v.net</i>'</span>
        </div>
        <!-- mouse pointer -->
        <svg class="absolute left-[63px] top-[77px] w-[9px] h-[12px]" viewBox="0 0 9 12"><path d="M1 0v10l2.500-2 1.500 3.500 2-1L5.500 7.500H9z" fill="#111" stroke="#fff" stroke-width=".5"/></svg>
      </div>
    </div>

    <!-- status bar -->
    <div class="flex-1 flex items-center bg-[#e8e8e8] text-[8px] text-[#333] border-t border-[#dedede]">
      <div class="ml-[2px] w-[157px] h-[16px] bg-white border border-[#c4c4c4] rounded-[2px] flex items-center pl-[5px] text-[#666] text-[9.300px]">
        <svg class="w-[10px] h-[10px]"><use href="#search"/></svg>
        <span class="ml-[6px]">Type to locate (⌘K)</span>
      </div>
      <span class="ml-[310px] font-medium">Coordinate</span>
      <div class="ml-[5px] w-[82px] h-[15px] bg-white border border-[#ccc] flex items-center pl-[4px]">2623186,1270894</div>
      <svg class="ml-[4px] w-[11px] h-[11px]"><use href="#chain"/></svg>
      <span class="ml-[10px] font-medium">Scale</span>
      <div class="ml-[5px] w-[64px] h-[15px] bg-white border border-[#ccc] flex items-center pl-[2px]">
        <span>1:81877</span>
        <span class="ml-auto mr-[4px] w-0 h-0 border-x-[3px] border-x-transparent border-t-[3px] border-t-[#444]"></span>
      </div>
      <svg class="ml-[9px] w-[11px] h-[11px]"><use href="#lock"/></svg>
      <span class="ml-[4.500px] font-medium">Magnifier</span>
      <div class="ml-[3px] w-[68px] h-[15px] bg-white border border-[#ccc] flex items-center pl-[3px]">
        <span>100%</span>
        <span class="ml-auto mr-[2px] flex flex-col gap-px">
          <span class="w-0 h-0 border-x-[2.500px] border-x-transparent border-b-[3px] border-b-[#444]"></span>
          <span class="w-0 h-0 border-x-[2.500px] border-x-transparent border-t-[3px] border-t-[#444]"></span>
        </span>
      </div>
      <span class="ml-[6px]">Rotation</span>
      <div class="ml-[6px] w-[69px] h-[15px] bg-white border border-[#ccc] flex items-center pl-[3px]">
        <span>0.0 °</span>
        <span class="ml-auto mr-[2px] flex flex-col gap-px">
          <span class="w-0 h-0 border-x-[2.500px] border-x-transparent border-b-[3px] border-b-[#444]"></span>
          <span class="w-0 h-0 border-x-[2.500px] border-x-transparent border-t-[3px] border-t-[#444]"></span>
        </span>
      </div>
      <span class="ml-[6px] w-[10px] h-[10px] bg-white border border-[#aaa] rounded-[1px] text-[9px] leading-[9px] text-center font-bold">✓</span>
      <span class="ml-[4px]">Render</span>
      <svg class="ml-[13px] w-[10px] h-[10px]"><use href="#earth"/></svg>
      <span class="ml-[2px] font-medium">EPSG:2056</span>
      <svg class="ml-[19px] w-[11px] h-[11px]"><use href="#bubble"/></svg>
    </div>
  </div>
</div>

<script>
  // toolbar rows: icon name, "d" dropdown, "g10" grip with width, "l5" thin divider
  const gripW = { 5: 'w-[5px]', 6: 'w-[6px]', 10: 'w-[10px]', 11: 'w-[11px]', 12: 'w-[12px]' };
  const rows = [
    'new open save prj layman style g10 hand pan zin zout zfull zsel zlay z11 zlast znext map map3d bmk bmks clock ref g10 *sel *d attr d desel d loc d g10 ident abacus +gear sigma table d ruler d tip gearz d',
    'addrast gpkg vec feather chip mesh vt g10 pens pencil savedis linedis d vdis fxdis d tbldis trash cut copy paste undo redo g11 lbl pie l5 lblb lblr l6 lblg lblg lblg lblg lblg g10 globep globes globeb g11 py chart d g12 help g12 prof',
    'digi vdis d blob blob blob blob blob blob blob blob blob3 blob4 vdis split scis scis mrg dist rot d',
    'tools plan g10 cloud cloudup l5 gdown gup xtools g11 net'
  ];

  function cell(name, extra) {
    return `<span class="w-[24.300px] h-[24px] shrink-0 flex items-center justify-center ${extra}"><svg class="w-[20px] h-[20px]"><use href="#${name}"/></svg></span>`;
  }
  function toolbarItem(it) {
    if (it === 'd') return '<span class="w-[9px] shrink-0 flex justify-center"><span class="w-0 h-0 border-x-[3px] border-x-transparent border-t-[3px] border-t-[#333]"></span></span>';
    if (it === '*d') return '<span class="w-[9px] h-[24px] shrink-0 flex items-center justify-center bg-[#cfcfcf] border border-[#bbb] rounded-[2px]"><span class="w-0 h-0 border-x-[3px] border-x-transparent border-t-[3px] border-t-[#333]"></span></span>';
    if (/^g\d+$/.test(it)) return `<span class="${gripW[it.slice(1)]} h-[18px] shrink-0 flex justify-center"><span class="w-[2px] h-full border-l border-dotted border-[#c4c4c4]"></span></span>`;
    if (/^l\d+$/.test(it)) return `<span class="${gripW[it.slice(1)]} h-[18px] shrink-0 flex justify-center"><span class="w-px h-full bg-[#d8d8d8]"></span></span>`;
    if (it[0] === '*') return cell(it.slice(1), 'bg-[#d2d2d2] border border-[#b4b4b4] rounded-[2px]');
    if (it[0] === '+') return cell(it.slice(1), 'bg-[#d6d6d6] border border-[#c0c0c0] rounded-[2px]');
    return cell(it, '');
  }
  document.getElementById('toolbars').innerHTML = rows.map(r => `
    <div class="h-[28.500px] flex items-center pl-[3px] pt-px bg-[#eeeeec] border-b-2 border-[#d0d0ce]">
      <span class="w-[6px] h-[18px] shrink-0 border-l border-dotted border-[#c4c4c4]"></span>
      ${r.split(' ').map(toolbarItem).join('')}
    </div>`).join('');

  function small(list) {
    return list.map(n => {
      if (n === '|') return '<span class="w-px h-[12px] bg-[#d0d0d0] mx-[1px]"></span>';
      if (n === '_') return '<span class="w-[5px]"></span>';
      if (n === 'v') return '<span class="w-0 h-0 ml-[-3px] border-x-[3px] border-x-transparent border-t-[3px] border-t-[#333]"></span>';
      return `<svg class="w-[12px] h-[12px] mx-[1.500px] shrink-0"><use href="#${n}"/></svg>`;
    }).join('');
  }
  document.getElementById('layer-tools').innerHTML = small(['brush','addg','eye','filter','exp','_','dn2','up2','rm']);
  document.getElementById('proc-tools').innerHTML = small(['models','py','clock','hist','|','tag','|','wrench']);
  document.getElementById('id-tools').innerHTML = small(['nodes','|','dn2','up2','sun','|','dselr','|','copy','printd','|','idn','v'])
    + '<span class="ml-auto mr-[3px] text-[9px] text-[#444]">»</span>';

  // processing tree: depth, icon, label
  const tree = [
    ['a', 'clk2', 'Recently used'],
    ['r', 'grass', 'v.net', true],
    ['r', 'grass', 'v.net.bridge'],
    ['a', 'grass', 'GRASS'],
    ['v', '', 'Vector'],
    ['s', 'grass', 'v.net'],
    ['s', 'grass', 'v.net.alloc'],
    ['s', 'grass', 'v.net.allpairs'],
    ['s', 'grass', 'v.net.bridge'],
    ['s', 'grass', 'v.net.centrality'],
    ['s', 'grass', 'v.net.components'],
    ['s', 'grass', 'v.net.connectivity'],
    ['s', 'grass', 'v.net.distance'],
    ['s', 'grass', 'v.net.flow'],
    ['s', 'grass', 'v.net.iso'],
    ['s', 'grass', 'v.net.nreport'],
    ['s', 'grass', 'v.net.path']
  ];
  const arrow = '<span class="w-0 h-0 border-x-[3.500px] border-x-transparent border-t-[4px] border-t-[#444]"></span>';
  document.getElementById('tree').innerHTML = tree.map(([d, ic, label, hi]) => {
    const svg = `<svg class="w-[12px] h-[12px] shrink-0"><use href="#${ic}"/></svg>`;
    if (d === 'a') return `<div class="h-[13.200px] flex items-center pl-[4px]">${arrow}<span class="w-[6px]"></span>${svg}<span class="ml-[4px]">${label}</span></div>`;
    if (d === 'v') return `<div class="h-[13.200px] flex items-center pl-[19px]">${arrow}<span class="ml-[6px]">${label}</span></div>`;
    if (d === 'r') return `<div class="h-[13.200px] flex items-center pl-[32px] ${hi ? 'bg-[#d6d6d6]' : ''}">${svg}<span class="ml-[4px]">${label}</span></div>`;
    return `<div class="h-[13.200px] flex items-center pl-[47px]">${svg}<span class="ml-[3px]">${label}</span></div>`;
  }).join('');

  // tram network, traced from three crops of the map at 3x (origin x, origin y, points)
  // a third value of 0 on a point means a bend of the line with no stop on it
  const traces = [
    [550, 250, [
      [[147,75],[135,100,0],[155,138],[138,154],[152,186],[170,210,0],[161,225],[184,256],[205,275],[221,286],[239,299],[255,310],[275,326],[299,344],[314,354],[330,365],[345,380],[354,398]],
      [[451,47],[432,50,0],[425,72,0],[410,72],[370,67],[365,82],[370,128],[363,150],[345,184],[350,214],[347,238],[351,255],[353,274],[357,297],[368,314]],
      [[345,184],[357,184],[350,214]],
      [[723,35],[712,54],[702,78],[696,97],[695,102],[688,120],[675,136],[650,145,0],[640,162],[628,180],[605,194],[590,212,0],[573,217],[499,241],[473,264],[446,272],[423,289],[402,299],[387,306],[368,314],[355,321],[336,328],[327,316],[314,292],[300,272],[291,256],[280,238],[269,219],[250,194]],
      [[250,238],[280,238],[298,238],[347,238],[378,238],[392,252],[392,265],[402,299],[408,315,0],[395,336],[372,375],[358,381],[345,385],[354,398]],
      [[250,238],[252,283],[255,310],[259,326],[264,350],[266,365],[276,387],[294,405],[310,422],[326,423],[350,427],[384,452],[405,471],[445,507],[455,522],[473,558]],
      [[42,404],[59,396],[86,391],[110,399],[141,378],[161,364],[179,348],[207,353],[237,351],[266,365],[287,373],[317,391],[336,403],[354,398],[377,401],[410,393],[431,390],[462,378],[492,366],[516,375],[533,385],[560,420],[577,425]],
      [[158,451],[175,445],[207,437],[220,430],[233,421],[260,402],[276,387]],
      [[253,563],[263,519],[269,496],[281,467],[300,462],[315,440],[326,423],[336,403],[345,385]],
      [[243,512],[258,482],[266,462],[281,467]],
      [[336,328],[336,345],[345,380]],
      [[377,401],[395,431],[398,447],[384,452]],
      [[410,393],[429,407],[442,417],[457,428],[467,460],[511,490],[530,498,0],[559,534],[577,556],[610,568,0]]
    ]],
    [400, 400, [
      [[48,547],[60,530,0],[105,500,0],[130,482,0],[155,475,0],[165,458,0],[195,448],[265,451,0],[278,479],[342,479],[370,478,0],[411,493],[448,497],[505,505,0],[520,518,0],[547,524],[597,427],[611,391],[600,330],[613,261],[624,260],[649,225],[692,183],[703,152],[703,113],[713,69],[719,45],[731,17],[750,12]],
      [[692,62],[708,33],[716,12],[731,17]],
      [[809,505],[801,483],[796,447],[819,441],[834,403],[855,375],[868,333],[870,290],[878,245],[898,211],[912,200],[924,170],[923,151],[922,107],[905,72],[895,57],[855,20]],
      [[919,478],[922,445],[932,428,0],[965,432],[967,408],[965,371],[955,320],[968,282],[967,254],[961,219],[954,186],[948,171],[938,143],[922,107]],
      [[835,55],[861,66],[880,75],[866,93],[864,112],[840,102],[820,112],[802,112],[785,101],[786,86],[801,71],[809,43],[823,22],[844,32],[855,20]]
    ]],
    [660, 380, [
      [[127,37],[137,70],[181,99],[210,110,0],[229,144],[248,166],[292,186],[313,201],[350,223],[397,237],[438,252],[481,267],[487,268],[529,263],[571,263],[603,265],[617,266]]
    ]]
  ];

  let lines = '', stops = '';
  traces.forEach(([ox, oy, paths]) => paths.forEach(path => {
    const pts = path.map(p => [ox + p[0] / 3, oy + p[1] / 3, p[2]]);
    lines += `<polyline points="${pts.map(p => p[0] + ',' + p[1]).join(' ')}" fill="none" stroke="#b5808b" stroke-width="1"/>`;
    pts.forEach(p => { if (p[2] !== 0) stops += `<circle cx="${p[0]}" cy="${p[1]}" r="2.400" fill="#8a1029"/>`; });
  }));
  document.getElementById('map-canvas').innerHTML = lines + stops;
</script>
</body>
</html>
